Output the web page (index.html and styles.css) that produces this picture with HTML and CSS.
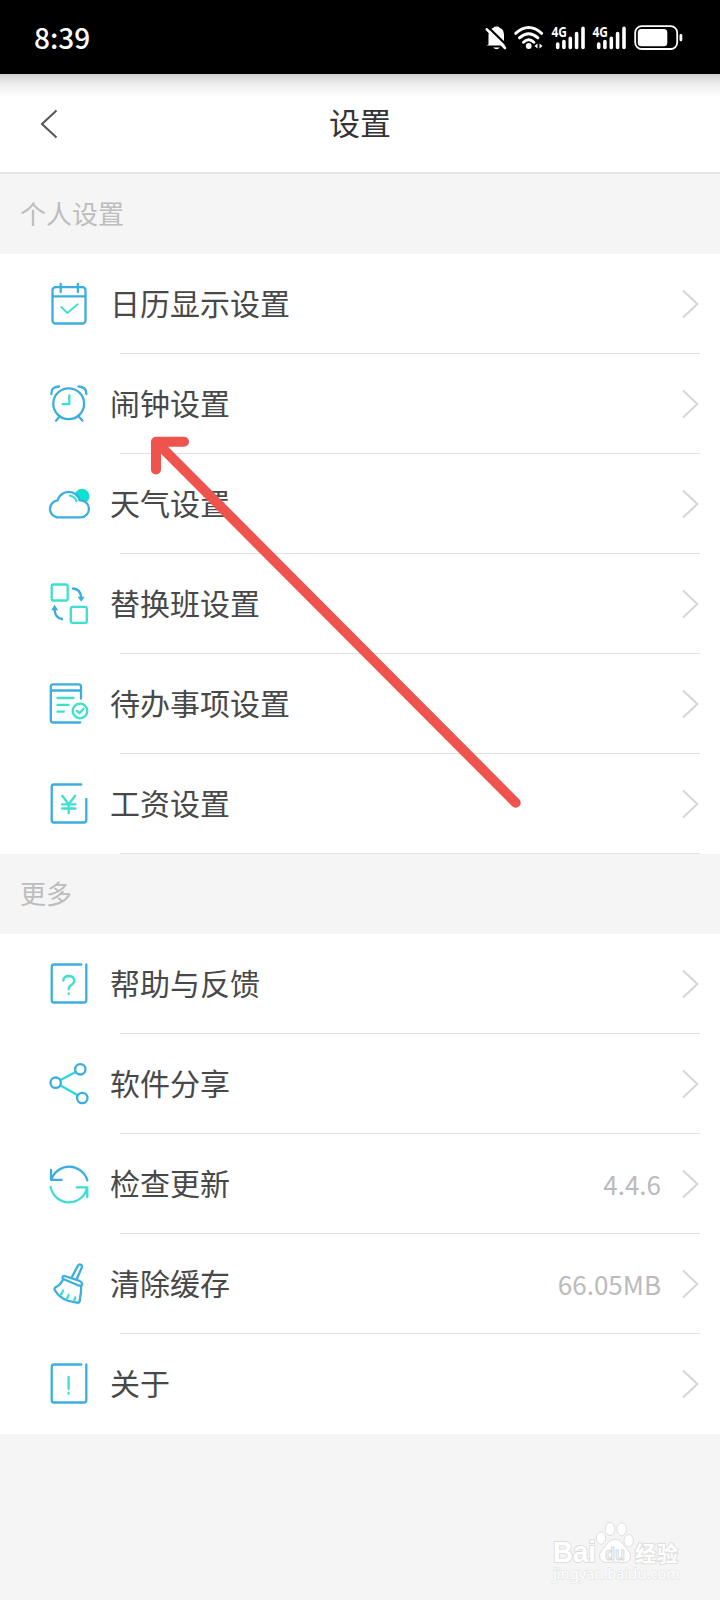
FILE: index.html
```html
<!DOCTYPE html>
<html lang="zh-CN">

<head>
	<meta charset="UTF-8">
	<title>设置</title>
	<link rel="stylesheet" href="styles.css">
</head>

<body>
	<div class="status-bar">
		<span class="time">8:39</span>
		<div class="status-icons">
			<svg width="22" height="26" viewBox="0 0 22 26">
				<path d="M3.500 19.500V10q0-6 5-7.300 0-1.200 3-1.200t3 1.200q4.500 1.300 4.500 7.300v6l1.500 4.500H1.500z" fill="#fff"/>
				<path d="M8 22.500h7q-3.500 3.500-7 0z" fill="#fff"/>
				<path d="M3 2L22 20.500" stroke="#000" stroke-width="2.200"/>
				<path d="M1.800 4.300L20 23" stroke="#fff" stroke-width="2.600" stroke-linecap="round"/>
			</svg>
			<svg width="30" height="26" viewBox="0 0 30 26" fill="none" stroke="#fff" stroke-width="2.900" stroke-linecap="round">
				<path d="M1.700 8.400Q14.700-3.400 27.700 8.400M5.500 12.900Q14.700 4.700 23.900 12.900M9.500 17.200Q14.700 12.400 19.900 17.200"/>
				<circle cx="14.700" cy="21" r="2.900" fill="#fff" stroke="none"/>
				<path d="M23.500 18.500v5l-3-2.500zM25.500 18.500v5l3-2.500z" fill="#fff" stroke="none"/>
			</svg>
			<svg width="34" height="26" viewBox="0 0 34 26">
				<text class="network" x="0.500" y="12.300" textLength="15.500" lengthAdjust="spacingAndGlyphs">4G</text>
				<path d="M6.700 19v3.500M12.900 16.500v6M19.300 13.300v9.200M25.600 8.600v13.900M32 3.400v19.100" stroke="#fff" stroke-width="3.600" stroke-linecap="round"/>
			</svg>
			<svg width="34" height="26" viewBox="0 0 34 26">
				<text class="network" x="0.500" y="12.300" textLength="15.500" lengthAdjust="spacingAndGlyphs">4G</text>
				<path d="M6.700 19v3.500M12.900 16.500v6M19.300 13.300v9.200M25.600 8.600v13.900M32 3.400v19.100" stroke="#fff" stroke-width="3.600" stroke-linecap="round"/>
			</svg>
			<svg width="50" height="26" viewBox="0 0 50 26">
				<rect x="2.200" y="1.200" width="42" height="22.800" rx="6.500" fill="none" stroke="#fff" stroke-width="1.800"/>
				<rect x="4.800" y="4" width="29.500" height="17.300" rx="3.500" fill="#fff"/>
				<rect x="46.500" y="9" width="2.800" height="7.300" rx="1.400" fill="#fff"/>
			</svg>
		</div>
	</div>

	<div class="header">
		<svg class="back" width="18" height="30" viewBox="0 0 18 30">
			<path d="M16.500 1.500L2 15l14.500 13.500"/>
		</svg>
		<h1>设置</h1>
	</div>

	<h2 class="group-title">个人设置</h2>
	<ul class="list">
		<li class="item">
			<svg class="icon" viewBox="0 0 48 48">
				<rect x="7.500" y="7.200" width="33" height="36.300" rx="3"/>
				<path d="M8 16.400h32M15.700 4v8M32.900 4v8"/>
				<path class="teal thin" d="M16.300 27l6 6 10.400-8.700"/>
			</svg>
			<span class="label">日历显示设置</span>
			<svg class="chevron" viewBox="0 0 17 30"><path d="M1 1.500L15.300 15 1 28.500"/></svg>
		</li>
		<li class="item">
			<svg class="icon" viewBox="0 0 48 48">
				<circle cx="23.700" cy="23.700" r="15.400"/>
				<path d="M6.300 14Q6 6.700 14 6.500M33.500 6.500Q41.500 6.700 41.400 14M14.500 36.500l-3.500 4.200M33.800 36.500l3.700 4.200"/>
				<path class="teal" d="M24.300 15.300v8.900h-6.600"/>
			</svg>
			<span class="label">闹钟设置</span>
			<svg class="chevron" viewBox="0 0 17 30"><path d="M1 1.500L15.300 15 1 28.500"/></svg>
		</li>
		<li class="item">
			<svg class="icon" viewBox="0 0 48 48">
				<circle class="sun" cx="37" cy="16.300" r="7.500"/>
				<path class="cloud" d="M12 37.400A8.600 8.600 0 0 1 12.600 20.400 11.500 11.500 0 0 1 34.800 20.400 8.500 8.500 0 1 1 36 37.400z"/>
				<path class="teal" d="M25 15.700q4.700.8 6.500 5.300"/>
			</svg>
			<span class="label">天气设置</span>
			<svg class="chevron" viewBox="0 0 17 30"><path d="M1 1.500L15.300 15 1 28.500"/></svg>
		</li>
		<li class="item">
			<svg class="icon" viewBox="0 0 48 48">
				<rect class="teal" x="6.700" y="4.500" width="16" height="16" rx="1.800"/>
				<rect class="teal" x="25.800" y="26.800" width="16" height="16" rx="1.800"/>
				<path d="M28 8.500q7.500.5 8.300 9M17 39q-7-1-7.300-9"/>
				<path class="blue-fill" d="M32.700 16.800h7l-3.500 5zM6.300 30.200h7l-3.800-5.500z"/>
			</svg>
			<span class="label">替换班设置</span>
			<svg class="chevron" viewBox="0 0 17 30"><path d="M1 1.500L15.300 15 1 28.500"/></svg>
		</li>
		<li class="item">
			<svg class="icon" viewBox="0 0 48 48">
				<path d="M36 18.500V6.500q0-2.200-2.500-2.200H8.300q-2.500 0-2.500 2.200V40q0 2.500 2.500 2.500h26.900M5.800 10.500H36"/>
				<path class="teal" d="M12.500 18h16M12.500 24.900h11M12.500 31.700h6.300"/>
				<circle class="teal" cx="35" cy="31" r="7.300"/>
				<path class="teal" d="M31.800 30.900l2.700 2.300 4-4.400"/>
			</svg>
			<span class="label">待办事项设置</span>
			<svg class="chevron" viewBox="0 0 17 30"><path d="M1 1.500L15.300 15 1 28.500"/></svg>
		</li>
		<li class="item">
			<svg class="icon" viewBox="0 0 48 48">
				<path d="M36.300 4.500H9q-2.300 0-2.300 2.300v33.400q0 2.300 2.300 2.300h30q2.300 0 2.300-2.300V19"/>
				<path class="teal" d="M17.300 15.800l6.400 8.400 6.400-8.400M23.700 24.200v9M17 24.300h13.500M17 28.500h13.500"/>
			</svg>
			<span class="label">工资设置</span>
			<svg class="chevron" viewBox="0 0 17 30"><path d="M1 1.500L15.300 15 1 28.500"/></svg>
		</li>
	</ul>

	<h2 class="group-title">更多</h2>
	<ul class="list last">
		<li class="item">
			<svg class="icon" viewBox="0 0 48 48">
				<path d="M36.300 4.500H9q-2.300 0-2.300 2.300v33.400q0 2.300 2.300 2.300h30q2.300 0 2.300-2.300V4.500"/>
				<path class="teal" d="M18.300 20.500q.5-4.500 5.400-4.500 5.500.2 5.500 4.800 0 2.400-2.800 4.200-2.700 1.600-2.700 4.300M23.700 33.300v.7"/>
			</svg>
			<span class="label">帮助与反馈</span>
			<svg class="chevron" viewBox="0 0 17 30"><path d="M1 1.500L15.300 15 1 28.500"/></svg>
		</li>
		<li class="item">
			<svg class="icon" viewBox="0 0 48 48">
				<path class="cyan" d="M15.500 20L30.700 11.900M15.500 25.400l17.300 9.900"/>
				<circle cx="10.700" cy="22.700" r="5.200"/>
				<circle cx="35.300" cy="9.300" r="5.200"/>
				<circle cx="37.300" cy="38" r="5.200"/>
			</svg>
			<span class="label">软件分享</span>
			<svg class="chevron" viewBox="0 0 17 30"><path d="M1 1.500L15.300 15 1 28.500"/></svg>
		</li>
		<li class="item">
			<svg class="icon" viewBox="0 0 48 48">
				<path d="M6 10v9.800h10.700M6.500 19.300A18.800 18.800 0 0 1 42.300 20.300"/>
				<path class="teal" d="M31.700 27.400h10.600v9.800M5.600 26.900a18.600 18.600 0 0 0 36.500.8"/>
			</svg>
			<span class="label">检查更新</span>
			<span class="value">4.4.6</span>
			<svg class="chevron" viewBox="0 0 17 30"><path d="M1 1.500L15.300 15 1 28.500"/></svg>
		</li>
		<li class="item">
			<svg class="icon" viewBox="0 0 48 48">
				<path d="M27 17l5.700-11q1.300-2.400 3.300-1.300 1.600 1 .6 3.300L31.700 19"/>
				<path d="M17.700 18.500q-1-2.500 2-2.500L33 20.300q5 2 4 4.500-1 1.500-4 .5L20 19.700q-1.800-.4-2.300-1.200z"/>
				<path d="M18 19.500q-2.500 5.500-7.300 7.700-2 1.200-.7 3.300 6 10.500 21.800 12.200 2.700.3 3-2.200.2-3 1-7l.4-7.500"/>
				<path class="teal" d="M15.500 35q1.800-1.800 2.500-4.500M21.700 38.700q1.700-1.800 1.800-3.700M29 40.500q1-1.500 1-3"/>
			</svg>
			<span class="label">清除缓存</span>
			<span class="value">66.05MB</span>
			<svg class="chevron" viewBox="0 0 17 30"><path d="M1 1.500L15.300 15 1 28.500"/></svg>
		</li>
		<li class="item">
			<svg class="icon" viewBox="0 0 48 48">
				<path d="M36.300 4.500H9q-2.300 0-2.300 2.300v33.400q0 2.300 2.300 2.300h30q2.300 0 2.300-2.300V4.500"/>
				<path class="teal" d="M23.600 17v12M23.600 33v.8"/>
			</svg>
			<span class="label">关于</span>
			<svg class="chevron" viewBox="0 0 17 30"><path d="M1 1.500L15.300 15 1 28.500"/></svg>
		</li>
	</ul>

	<!-- arrow pointing at the alarm row -->
	<svg class="pointer" width="390" height="390" viewBox="0 0 390 390">
		<path d="M44 11.700H16v27.800M16 11.700L375.700 372.700"/>
	</svg>

	<svg class="watermark" width="150" height="75" viewBox="0 0 150 75">
		<g class="paw">
			<ellipse cx="56" cy="23" rx="4.700" ry="6.200"/>
			<ellipse cx="65" cy="14" rx="4.800" ry="6.500"/>
			<ellipse cx="76.700" cy="14.300" rx="4.800" ry="6.500"/>
			<ellipse cx="83.700" cy="25.700" rx="4.700" ry="6.200"/>
			<path d="M70 24q5 0 8 5 2 3 5 6 4 4 2 8.500-2 4.500-8 4-7-1.200-14 0-6 .5-8-4-2-4.500 2-8.500 3-3 5-6 3-5 8-5z"/>
		</g>
		<text class="brand" x="8" y="47" textLength="43" lengthAdjust="spacingAndGlyphs">Bai</text>
		<text class="du" x="60" y="45" textLength="20" lengthAdjust="spacingAndGlyphs">du</text>
		<text class="brand cn" x="90" y="45.500" textLength="43">经验</text>
		<text class="site" x="8" y="64" textLength="127" lengthAdjust="spacingAndGlyphs">jingyan.baidu.com</text>
	</svg>
</body>

</html>
```

FILE: styles.css
```css
* {
	box-sizing: border-box;
}

body {
	margin: 0;
	position: relative;
	min-height: 1600px;
	background-color: #f5f5f5;
	font-family: "Noto Sans CJK SC", sans-serif;
	color: #484848;
}

svg {
	display: block;
	flex-shrink: 0;
	overflow: visible;
}

.status-bar {
	height: 74px;
	padding: 2px 37px 0 34px;
	background-color: #000;
	color: #fff;
	display: flex;
	align-items: center;
	justify-content: space-between;
}

.time {
	padding-bottom: 2px;
	font-size: 28px;
	font-weight: 500;
	line-height: 40px;
}

.status-icons {
	display: flex;
	gap: 7px;
}

.network {
	font: bold 14px "Noto Sans", sans-serif;
	fill: #fff;
}

.header {
	height: 100px;
	padding: 0 40px;
	border-bottom: 2px solid #e4e4e4;
	background: linear-gradient(#d0d0d0, #eee 10px, #fff 23px);
	display: grid;
	grid-template-columns: 18px 1fr 18px;
	align-items: center;
}

.back {
	margin-top: 1px;
	fill: none;
	stroke: #555;
	stroke-width: 2;
}

h1 {
	margin: 0;
	padding-bottom: 2px;
	font-size: 31px;
	font-weight: 400;
	line-height: 46px;
	text-align: center;
	color: #333;
}

.group-title {
	margin: 0;
	height: 80px;
	padding-left: 20px;
	font-size: 26px;
	font-weight: 400;
	line-height: 78px;
	color: #bdbdbd;
}

.list {
	margin: 0;
	padding: 0 20px 0 45px;
	list-style: none;
	background-color: #fff;
}

.item {
	height: 100px;
	display: flex;
	align-items: center;
	background: linear-gradient(#e2e2e2, #e2e2e2) right bottom / 580px 1px no-repeat;
}

.last .item:last-child {
	background: none;
}

.icon {
	width: 48px;
	height: 48px;
	fill: none;
	stroke: #3badde;
	stroke-width: 2.300;
	stroke-linecap: round;
	stroke-linejoin: round;
}

.icon .teal {
	stroke: #3ddfd0;
}

.icon .thin {
	stroke-width: 1.800;
}

.icon .cyan {
	stroke: #23dce0;
}

.icon .sun {
	fill: #10dfd2;
	stroke: none;
}

.icon .cloud {
	fill: #fff;
}

.icon .blue-fill {
	fill: #3badde;
	stroke: none;
}

.label {
	flex: 1;
	margin-left: 17px;
	padding-bottom: 4px;
	font-size: 30px;
	line-height: 44px;
}

.value {
	margin-right: 21px;
	font-size: 26px;
	line-height: 40px;
	color: #bbb;
}

.chevron {
	width: 17px;
	height: 30px;
	margin-right: 1px;
	margin-bottom: 1px;
	fill: none;
	stroke: #d6d6d6;
	stroke-width: 2;
}

.pointer {
	position: absolute;
	left: 140px;
	top: 430px;
	fill: none;
	stroke: #ef534d;
	stroke-width: 10;
	stroke-linecap: round;
	stroke-linejoin: round;
}

.watermark {
	position: absolute;
	left: 545px;
	top: 1515px;
}

.paw,
.brand {
	fill: #fff;
	stroke: #dedede;
	stroke-width: 1;
}

.brand {
	font: bold 29px "Liberation Sans", sans-serif;
	stroke-width: 2;
	paint-order: stroke;
}

.cn {
	font: bold 21px "Noto Sans CJK SC", sans-serif;
}

.du {
	font: bold 19px "Liberation Sans", sans-serif;
	fill: #f5f5f5;
	stroke: #d8d8d8;
	stroke-width: 1;
}

.site {
	font: 15px "Noto Sans", sans-serif;
	fill: #fff;
	stroke: #e6e6e6;
	stroke-width: 1.500;
	paint-order: stroke;
}
```
